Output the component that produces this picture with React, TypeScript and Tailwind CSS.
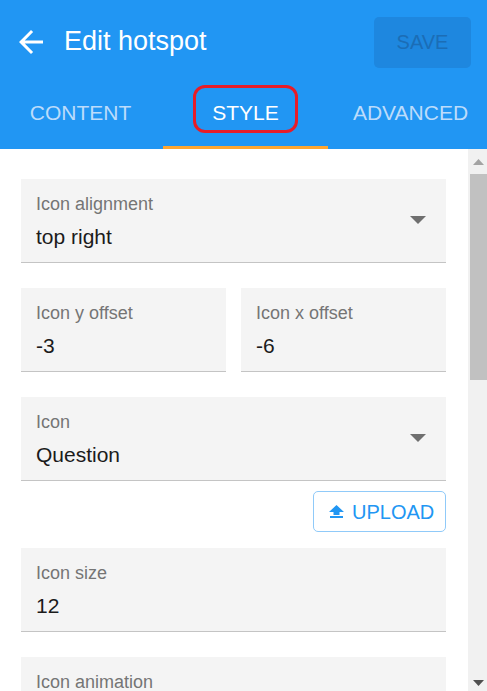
import React from "react";

type FieldProps = {
  label: string;
  value: string;
  select?: boolean;
  className?: string;
};

const Field: React.FC<FieldProps> = ({ label, value, select, className }) => {
  return (
    <div
      className={`flex items-center bg-[#f4f4f4] border-b border-[#c4c4c4] pl-[15px] pr-[20px] ${className ?? ""}`}
    >
      <div className="flex flex-col flex-1 pt-[15px] pb-[13px]">
        <span className="text-[18px] leading-[20px] text-[#757575]">{label}</span>
        <span className="mt-[11px] text-[21px] leading-[24px] text-[#1b1b1b]">{value}</span>
      </div>
      {select && (
        <svg width="16" height="8" viewBox="0 0 16 8" className="mt-[-2px]">
          <polygon points="0,0 16,0 8,8" fill="#6f6f6f" />
        </svg>
      )}
    </div>
  );
};

const UploadIcon = () => (
  <svg width="15" height="13" viewBox="0 0 15 13">
    <polygon points="7.5,0 15,7 10.5,7 10.5,10 4.5,10 4.5,7 0,7" fill="#2196f3" />
    <rect x="1" y="11" width="13" height="2" fill="#2196f3" />
  </svg>
);

const tabs = ["CONTENT", "STYLE", "ADVANCED"];

export default function App() {
  return (
    <div className="w-[487px] h-[691px] overflow-hidden flex flex-col bg-white font-['Liberation_Sans',Arial,sans-serif]">
      <header className="bg-[#2196f3] flex flex-col shrink-0">
        <div className="h-[82px] flex items-center pl-[13px] pr-[16px]">
          <svg width="36" height="36" viewBox="0 0 24 24" className="mt-[2px]">
            <path
              d="M20 11H7.83l5.59-5.59L12 4l-8 8 8 8 1.41-1.41L7.83 13H20v-2z"
              fill="#ffffff"
            />
          </svg>
          <h1 className="ml-[15px] text-[27px] text-white leading-none">Edit hotspot</h1>
          <button className="ml-auto mt-[2px] w-[97px] h-[51px] rounded-[5px] bg-[#1e87df] text-[#1b6db6] text-[20px]">
            SAVE
          </button>
        </div>
        <nav className="flex ml-[-2px] h-[67px]">
          {tabs.map((t) => {
            const active = t === "STYLE";
            return (
              <div
                key={t}
                className={`relative w-[165px] shrink-0 flex items-center justify-center border-b-[3px] ${
                  active ? "border-[#ffa630] text-white" : "border-transparent text-[#bcdcfb]"
                }`}
              >
                <span className="text-[21px] mt-[-3px]">{t}</span>
                {active && (
                  <div className="absolute left-[30px] top-[3px] w-[105px] h-[48px] rounded-[12px] border-[3px] border-[#e81c27]" />
                )}
              </div>
            );
          })}
        </nav>
      </header>

      <div className="flex flex-1 min-h-0">
        <main className="w-[468px] shrink-0 pl-[21px] pr-[22px] pt-[30px] flex flex-col">
          <Field label="Icon alignment" value="top right" select />
          <div className="mt-[25px] grid grid-cols-2 gap-[15px]">
            <Field label="Icon y offset" value="-3" />
            <Field label="Icon x offset" value="-6" />
          </div>
          <Field className="mt-[25px]" label="Icon" value="Question" select />
          <div className="mt-[10px] flex justify-end">
            <button className="w-[133px] h-[41px] rounded-[5px] border border-[#90caf9] flex items-center pl-[15px] gap-[8px] text-[#2196f3] text-[20px]">
              <UploadIcon />
              <span>UPLOAD</span>
            </button>
          </div>
          <Field className="mt-[16px]" label="Icon size" value="12" />
          <Field className="mt-[25px]" label="Icon animation" value="none" select />
        </main>

        <div className="w-[19px] bg-[#f1f1f1] flex flex-col items-end">
          <div className="w-[17px] h-[25px] flex items-center justify-center">
            <svg width="11" height="6" viewBox="0 0 11 6">
              <polygon points="0,6 11,6 5.5,0" fill="#a3a3a3" />
            </svg>
          </div>
          <div className="w-[17px] h-[206px] bg-[#c1c1c1]" />
          <div className="flex-1" />
          <div className="w-[17px] h-[20px] flex items-start justify-center pt-[9px]">
            <svg width="11" height="6" viewBox="0 0 11 6">
              <polygon points="0,0 11,0 5.5,6" fill="#505050" />
            </svg>
          </div>
        </div>
      </div>
    </div>
  );
}
